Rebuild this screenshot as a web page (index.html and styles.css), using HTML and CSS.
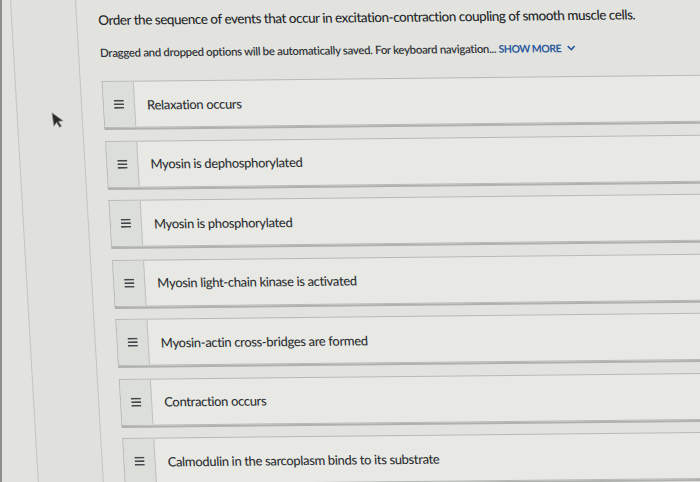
FILE: index.html
```html
<!DOCTYPE html>
<html lang="en">
<head>
    <meta charset="UTF-8">
    <meta name="viewport" content="width=device-width, initial-scale=1.0">
    <title>Ordering question</title>
    <link rel="stylesheet" href="styles.css">
</head>
<body>
    <div class="screen">
        <div class="gutter"></div>
        <aside class="sidebar"></aside>

        <main class="question">
            <p class="prompt">Order the sequence of events that occur in excitation-contraction coupling of smooth muscle cells.</p>
            <p class="hint">
                Dragged and dropped options will be automatically saved. For keyboard navigation...
                <button class="show-more">SHOW MORE
                    <svg width="9" height="6" viewBox="0 0 9 6"><path d="M1 1l3.5 3.5L8 1" fill="none" stroke="#2b5a9c" stroke-width="1.6"/></svg>
                </button>
            </p>

            <ol class="choices">
                <li class="choice">
                    <span class="handle"><svg width="10" height="9" viewBox="0 0 10 9"><rect y="0" width="10" height="1.6"/><rect y="3.6" width="10" height="1.6"/><rect y="7.2" width="10" height="1.6"/></svg></span>
                    <span class="label">Relaxation occurs</span>
                </li>
                <li class="choice">
                    <span class="handle"><svg width="10" height="9" viewBox="0 0 10 9"><rect y="0" width="10" height="1.6"/><rect y="3.6" width="10" height="1.6"/><rect y="7.2" width="10" height="1.6"/></svg></span>
                    <span class="label">Myosin is dephosphorylated</span>
                </li>
                <li class="choice">
                    <span class="handle"><svg width="10" height="9" viewBox="0 0 10 9"><rect y="0" width="10" height="1.6"/><rect y="3.6" width="10" height="1.6"/><rect y="7.2" width="10" height="1.6"/></svg></span>
                    <span class="label">Myosin is phosphorylated</span>
                </li>
                <li class="choice">
                    <span class="handle"><svg width="10" height="9" viewBox="0 0 10 9"><rect y="0" width="10" height="1.6"/><rect y="3.6" width="10" height="1.6"/><rect y="7.2" width="10" height="1.6"/></svg></span>
                    <span class="label">Myosin light-chain kinase is activated</span>
                </li>
                <li class="choice">
                    <span class="handle"><svg width="10" height="9" viewBox="0 0 10 9"><rect y="0" width="10" height="1.6"/><rect y="3.6" width="10" height="1.6"/><rect y="7.2" width="10" height="1.6"/></svg></span>
                    <span class="label">Myosin-actin cross-bridges are formed</span>
                </li>
                <li class="choice">
                    <span class="handle"><svg width="10" height="9" viewBox="0 0 10 9"><rect y="0" width="10" height="1.6"/><rect y="3.6" width="10" height="1.6"/><rect y="7.2" width="10" height="1.6"/></svg></span>
                    <span class="label">Contraction occurs</span>
                </li>
                <li class="choice">
                    <span class="handle"><svg width="10" height="9" viewBox="0 0 10 9"><rect y="0" width="10" height="1.6"/><rect y="3.6" width="10" height="1.6"/><rect y="7.2" width="10" height="1.6"/></svg></span>
                    <span class="label">Calmodulin in the sarcoplasm binds to its substrate</span>
                </li>
            </ol>
        </main>
    </div>

    <!-- mouse pointer -->
    <svg class="pointer" width="12" height="18" viewBox="0 0 12 18">
        <path d="M1 1v13.5l3.3-3.2 2.3 5.2 2-0.9-2.3-5.1h4.6z" fill="#2a2a2a" stroke="#9a9a96" stroke-width="0.8"/>
    </svg>
</body>
</html>
```

FILE: styles.css
```css
html, body {
    margin: 0;
    padding: 0;
    height: 100%;
    overflow: hidden;
}

body {
    background: #e2e3de;
    font-family: 'Lato', 'Liberation Sans', sans-serif;
    color: #2f3134;
    border-left: 2px solid #8d8f8c;
    box-sizing: border-box;
}

.screen {
    display: flex;
    min-height: 100vh;
    width: 780px;
    transform: skewX(2.7deg) rotate(-0.6deg);
    transform-origin: 0 0;
}

.gutter {
    width: 8px;
    flex-shrink: 0;
}

.sidebar {
    width: 64px;
    flex-shrink: 0;
    border-left: 1px solid #c3c5c0;
    border-right: 1px solid #c3c5c0;
    background: #e0e1dc;
}

.question {
    flex: 1;
    padding: 12px 0 0 21px;
}

.prompt {
    margin: 0;
    font-size: 13.5px;
    line-height: 18px;
    font-weight: 500;
    letter-spacing: -0.46px;
    color: #26282b;
}

.hint {
    margin: 16px 0 0;
    font-size: 11.5px;
    line-height: 16px;
    font-weight: 600;
    letter-spacing: -0.35px;
    color: #33353a;
}

.show-more {
    background: none;
    border: none;
    padding: 0;
    font: inherit;
    font-size: 10.5px;
    font-weight: 700;
    letter-spacing: -0.5px;
    color: #2b5a9c;
    cursor: pointer;
}

.show-more svg {
    margin-left: 4px;
    vertical-align: 1px;
}

.choices {
    list-style: none;
    margin: 20px 0 0;
    padding: 0;
    display: flex;
    flex-direction: column;
    gap: 12.5px;
}

.choice {
    display: flex;
    height: 45px;
    background: #e8e9e5;
    border: 1px solid #b6b9b5;
    border-right: none;
    box-shadow: 0 2px 0 #aeb1ad;
}

.handle {
    width: 30px;
    flex-shrink: 0;
    display: flex;
    align-items: center;
    justify-content: center;
    background: #dcdeda;
    border-right: 1px solid #bfc1bd;
    fill: #45474a;
}

.label {
    display: flex;
    align-items: center;
    padding-left: 12px;
    font-size: 13px;
    font-weight: 500;
    letter-spacing: -0.35px;
    color: #2f3134;
}

.pointer {
    position: absolute;
    left: 52px;
    top: 111px;
    transform: rotate(-8deg);
}
```
